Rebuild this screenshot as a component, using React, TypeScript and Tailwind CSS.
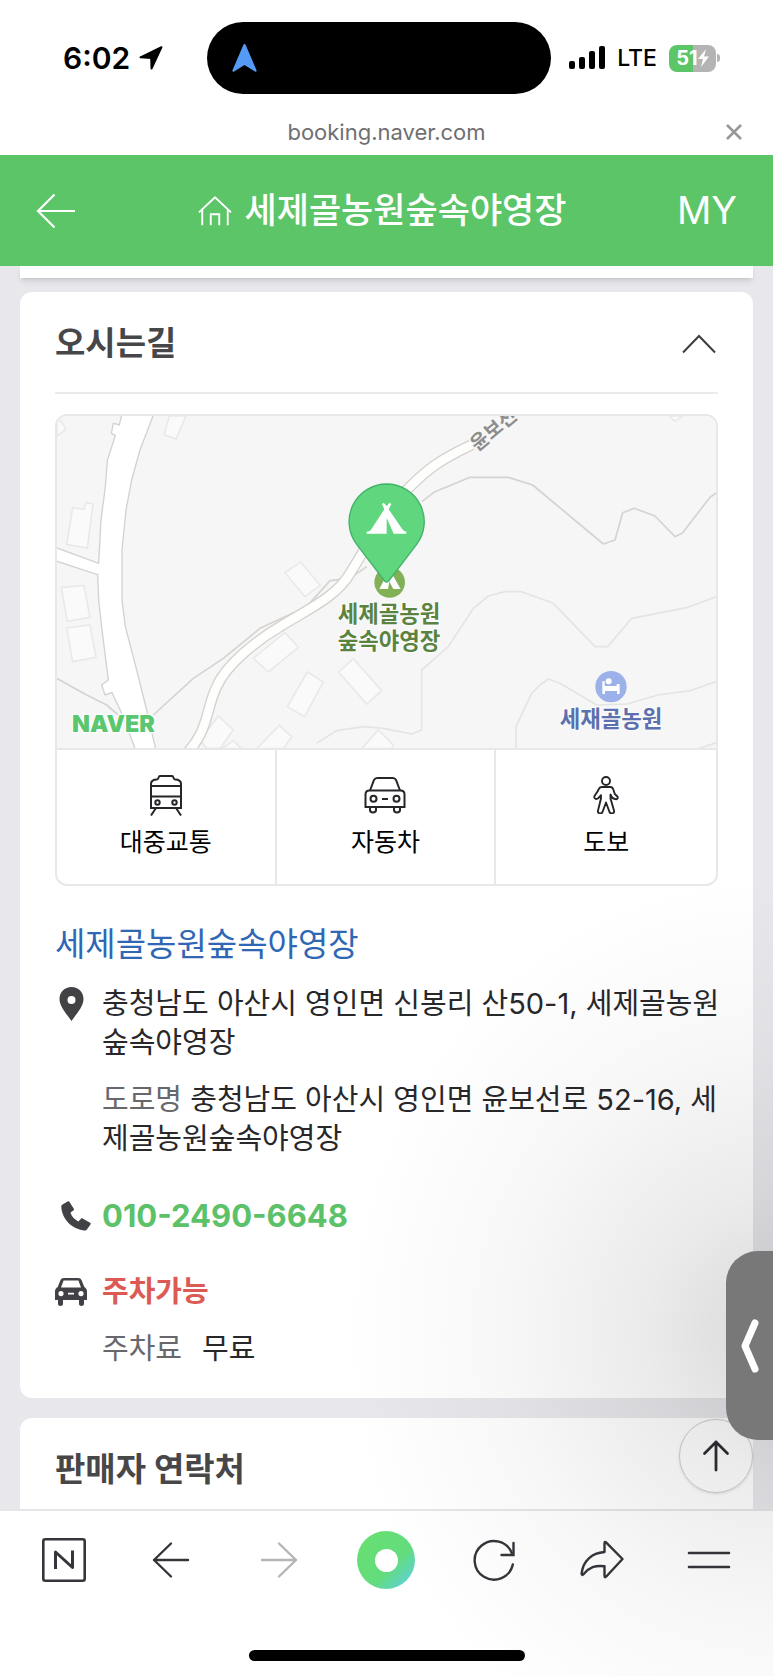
import type { ReactNode } from "react";

const tabs = [
  { name: "대중교통", icon: <TramIcon /> },
  { name: "자동차", icon: <CarIcon /> },
  { name: "도보", icon: <WalkIcon /> },
];

const buildings = [
  "51,62 64,64 78,88 51,108",
  "388,48 438,48 408,117 372,104",
  "98,323 132,328 138,308 159,312 142,444 80,434",
  "64,563 132,556 150,652 82,664",
  "80,684 150,675 168,772 98,785",
  "735,518 782,486 840,556 795,590",
  "640,775 735,697 775,742 685,816",
  "742,920 802,816 850,846 794,950",
  "896,816 940,776 1025,872 980,912",
  "480,1020 535,948 580,990 540,1045 500,1045",
  "545,1046 580,1022 605,1046",
  "650,1046 718,976 755,1010 730,1046",
  "965,1046 1015,990 1060,1035 1055,1046",
  "1888,48 1928,48 1904,64",
];

function TramIcon() {
  return (
    <svg width="34" height="42" viewBox="0 0 34 42" fill="none" stroke="#25262a" strokeWidth="2">
      <path d="M2 34V10c0-3 2-4.500 6-4.500 2 0 1-3.500 3-3.500h12c2 0 1 3.500 3 3.500 4 0 6 1.500 6 4.500v24z" />
      <path d="M2 12h30M2 22.500h30" />
      <circle cx="8.500" cy="28.500" r="2.200" />
      <circle cx="25.500" cy="28.500" r="2.200" />
      <path d="M7 34l-5 7.500M27 34l5 7.500" />
    </svg>
  );
}

function CarIcon() {
  return (
    <svg width="42" height="38" viewBox="0 0 42 38" fill="none" stroke="#25262a" strokeWidth="2">
      <path d="M6 14.500l4-10.500c.8-1.600 1.600-2 3.300-2h15.400c1.700 0 2.500.4 3.300 2l4 10.500" />
      <path d="M1.500 31V18.500c0-2.800 1.500-4 4-4h31c2.500 0 4 1.200 4 4V31z" />
      <path d="M6 31v3c0 3.200 6 3.200 6 0v-3M30 31v3c0 3.200 6 3.200 6 0v-3M18 23h6" />
      <circle cx="9.500" cy="22.800" r="3" />
      <circle cx="32.500" cy="22.800" r="3" />
    </svg>
  );
}

function WalkIcon() {
  return (
    <svg width="26" height="38" viewBox="0 0 26 38" fill="none" stroke="#25262a" strokeWidth="1.900" strokeLinejoin="round">
      <circle cx="13" cy="5" r="4" />
      <path d="M8.500 11h9c1.800 0 2.300 1 2.800 2.500l1.500 4.500 2.600 2.500c1 1.500-.4 3.600-2.400 2.500l-2.500-1-2-3.500v4l3.500 12c.8 3-3.200 4-4.500 1.500L13 26.500 9.500 36c-1.300 2.500-5.300 1.500-4.500-1.500l3-12v-3.300c-1.500 1.500-3 4.300-4.800 3.800-1.700-.4-2.200-1.700-1.700-3l2.700-4 1.500-2.800c.6-1.500 1.300-2.200 2.800-2.200z" />
    </svg>
  );
}

function StatusBar() {
  return (
    <div className="flex h-[113px] items-start pt-[22px] text-black">
      <div className="flex h-[72px] w-[207px] flex-none items-center gap-[9px] pl-[63px]">
        <span className="text-[30px] font-semibold">6:02</span>
        <svg width="24" height="24" viewBox="0 0 24 24">
          <path
            d="M22.500 1.200L1.500 11.300l10.700.7.300 10.500z"
            stroke="#000"
            strokeWidth="2"
            strokeLinejoin="round"
          />
        </svg>
      </div>
      <div className="flex h-[72px] grow items-center rounded-full bg-black pl-[25px]">
        <svg width="25" height="28" viewBox="0 0 25 28">
          <path
            d="M12.500 0c.6 0 1 .4 1.300 1.200l10.700 25c.5 1.300-.5 2-1.600 1.300L12.500 21 2.100 27.500c-1.100.7-2.100 0-1.600-1.300l10.700-25c.3-.8.700-1.200 1.300-1.200z"
            fill="#549bf8"
          />
        </svg>
      </div>
      <div className="flex h-[72px] w-[222px] flex-none items-center justify-end gap-3 pr-[53px]">
        <svg width="36" height="24" viewBox="0 0 36 24">
          <rect x="0" y="15" width="6" height="8" rx="2" />
          <rect x="10" y="11" width="6" height="12" rx="2" />
          <rect x="20" y="5" width="6" height="18" rx="2" />
          <rect x="30" y="0" width="6" height="23" rx="2" />
        </svg>
        <span className="text-[23px] font-medium">LTE</span>
        <div className="flex items-center gap-px">
          <div className="flex h-[27px] w-[47px] items-center justify-center rounded-lg bg-[linear-gradient(90deg,#5cc568_51%,#b4b4b4_51%)] text-white">
            <span className="text-[20px] font-bold">51</span>
            <svg width="11" height="18" viewBox="0 0 11 18" fill="currentColor">
              <path d="M8 0L0 10h5l-2 8 8-10.500H6z" />
            </svg>
          </div>
          <div className="h-2 w-[3px] rounded-r-full bg-[#b4b4b4]"></div>
        </div>
      </div>
    </div>
  );
}

function RouteMap() {
  return (
    <svg
      className="block h-[332px] w-full bg-[#f6f6f6]"
      viewBox="51 48 1977 996"
      preserveAspectRatio="xMidYMid slice"
      role="img"
      aria-label="지도"
    >
      <g fill="#fafafa" stroke="#e9e9eb" strokeWidth="5">
        {buildings.map((points) => (
          <polygon key={points} points={points} />
        ))}
      </g>

      {/* contour lines */}
      <g fill="none" stroke="#e4e4e4" strokeWidth="5" strokeLinejoin="round">
        <path d="M830 1030l60-38 80-12 60 5 85 17 30-12V810l80-70 75-115 45-37 50-13h50l95 35 125 130h38l72-85 165-32 90-33" />
        <path d="M1428 1046v-66l47-100 25-25 25-18 35 13 110 65 90-3 95-27 95-13 80-28M1975 1046l55-18" />
        <path stroke="#d3d3d3" d="M1145 305l40-30 105-43h115l73 23 212 177 35-12 23-82 35-13 62 23 60 62 23-12 82-106 20-14" />
        <path stroke="#d6d3d1" d="M340 945l120-110 90-60 110-90 140-65 70-78 60-7 50-35M50 835l90 50 60 30 35 30" />
      </g>

      {/* roads */}
      <path
        d="M246 40l-8 35-18-5-6 30 12 6-24 76-6 78-13 100-7 130L40 440v40l133 44 3 76 10 90 19 150-20 15 10 30 21-7 34 72 40 110h60l-30-130-30-120-34-130-10-80V450l12-120 17-90 25-90 42-110z"
        fill="#fff"
        stroke="#d5d1cf"
        strokeWidth="4"
      />
      <g fill="none" strokeLinecap="round">
        <path d="M420 1080C510 1000 495 930 530 860C560 790 660 715 720 680C800 630 890 590 930 520C980 440 1040 330 1105 265C1165 205 1200 180 1290 137" stroke="#d5d1cf" strokeWidth="34" />
        <path d="M420 1080C510 1000 495 930 530 860C560 790 660 715 720 680C800 630 890 590 930 520C980 440 1040 330 1105 265C1165 205 1200 180 1290 137" stroke="#fefefc" strokeWidth="26" />
      </g>
      <text
        transform="translate(1312 156) rotate(-40)"
        fontSize="58"
        fontWeight="600"
        fill="#8d8d8d"
        stroke="#f6f6f6"
        strokeWidth="10"
        paintOrder="stroke"
      >
        윤보선
      </text>

      {/* campsite */}
      <circle cx="1049" cy="547" r="46" fill="#82b057" />
      <path d="M1018 567l22-42h18l24 42h-22l-12-22-4 22z" fill="#fff" />
      <path
        d="M1040 252a113 113 0 0 1 90 181L1046 543q-6 7-12 0L950 433A113 113 0 0 1 1040 252z"
        fill="#60d67f"
        stroke="#43b36b"
        strokeWidth="4"
      />
      <path
        d="M1031 308l9 10 9-10 5 4-8 16 40 58q5 9 13 9v6h-38l-21-47v47h-60v-6q10 0 15-9l38-58-7-16z"
        fill="#fff"
      />
      <g
        fontSize="67"
        fontWeight="600"
        textAnchor="middle"
        stroke="#fbfbfb"
        strokeWidth="8"
        paintOrder="stroke"
        strokeLinejoin="round"
      >
        <text x="1047" y="665" fill="#5b8340">
          세제골농원
        </text>
        <text x="1047" y="748" fill="#5b8340">
          숲속야영장
        </text>
        <text x="1713" y="980" fill="#5b70ae">
          세재골농원
        </text>
      </g>
      <circle cx="1713" cy="860" r="47" fill="#9cb1e9" />
      <path d="M1687 844h7v14h36v-6h9v30h-8v-9h-36v9h-8z" fill="#fff" />
      <circle cx="1706" cy="844" r="9" fill="#fff" />

      <text
        x="96"
        y="996"
        fontSize="70"
        fontWeight="900"
        fill="#5ac66f"
        stroke="#fff"
        strokeWidth="8"
        paintOrder="stroke"
      >
        NAVER
      </text>
    </svg>
  );
}

function InfoRow({ icon, children }: { icon?: ReactNode; children: ReactNode }) {
  return (
    <div className="-mr-2 flex">
      <div className="flex h-[39px] w-[47px] flex-none items-center">{icon}</div>
      <div className="min-w-0 grow break-all">{children}</div>
    </div>
  );
}

function Directions() {
  return (
    <section className="rounded-xl bg-white px-[35px] pb-[30px]">
      <header className="flex h-[102px] items-center justify-between border-b-2 border-[#ebebed] pt-[3px]">
        <h2 className="text-[33px] font-bold text-[#47474a]">오시는길</h2>
        <button aria-label="접기" className="mr-[2px]">
          <svg width="34" height="20" viewBox="0 0 34 20" fill="none" stroke="#3c3c40" strokeWidth="2">
            <path d="M1 18.500L17 2l16 16.500" />
          </svg>
        </button>
      </header>

      <div className="mt-5 overflow-hidden rounded-xl border-2 border-[#e8e8ea]">
        <RouteMap />
        <div className="grid h-[136px] grid-cols-3 divide-x-2 divide-[#e8e8ea] border-t-2 border-[#e8e8ea]">
          {tabs.map((tab) => (
            <button
              key={tab.name}
              className="flex flex-col items-center gap-[10px] pt-6 text-[25px] leading-8 text-black"
            >
              <span className="flex h-[42px] items-center">{tab.icon}</span>
              {tab.name}
            </button>
          ))}
        </div>
      </div>

      <h3 className="mt-[34px] text-[33px] leading-12 text-[#2f67b5]">
        <a href="#place">세제골농원숲속야영장</a>
      </h3>

      <div className="mt-4 text-[29px] leading-[39px] text-[#28282b]">
        <InfoRow
          icon={
            <svg className="ml-1" width="25" height="34" viewBox="0 0 25 34">
              <path
                d="M12.500 0C5.500 0 .5 5.200.5 12c0 7.500 6.500 14 12 22 5.500-8 12-14.500 12-22 0-6.800-5-12-12-12zm0 9a4 4 0 1 1 0 8 4 4 0 0 1 0-8z"
                fill="#424246"
              />
            </svg>
          }
        >
          <p>충청남도 아산시 영인면 신봉리 산50-1, 세제골농원숲속야영장</p>
          <p className="mt-[18px]">
            <span className="text-[#68686c]">도로명</span> 충청남도 아산시 영인면 윤보선로 52-16,
            세제골농원숲속야영장
          </p>
        </InfoRow>

        <div className="mt-[38px]">
          <InfoRow
            icon={
              <svg className="ml-[6px]" width="30" height="30" viewBox="0 0 30 30">
                <path
                  d="M1.500 3.500L7 .3c.6-.3 1.100-.1 1.400.5l4.400 7c.4.7.2 1.300-.4 1.700l-2.900 2c.9 3.600 4.200 7.200 8 9l2.400-2.700c.5-.6 1.100-.6 1.700-.2l7.500 4.200c.7.400.8 1 .4 1.700l-3.600 5c-.5.800-1.100 1-2 1C12 28.800.8 19 .3 5.600c0-1 .3-1.600 1.200-2.100z"
                  fill="#424246"
                />
              </svg>
            }
          >
            <a href="tel:010-2490-6648" className="text-[31px] font-bold text-[#5cc169]">
              010-2490-6648
            </a>
          </InfoRow>
        </div>

        <div className="mt-9">
          <InfoRow
            icon={
              <svg width="32" height="28" viewBox="0 0 32 28">
                <path
                  fillRule="evenodd"
                  d="M9 0h14c2 0 3 .8 3.700 2.500L29.300 9C31 10 32 11.500 32 13.500V22h-3v4c0 2.600-5 2.600-5 0v-4H8v4c0 2.600-5 2.600-5 0v-4H0v-8.500C0 11.500 1 10 2.700 9l2.600-6.500C6 .8 7 0 9 0zM8.600 2.500L6 9.500h20l-2.600-7zM6 13a2.600 2.600 0 1 0 0 5.200A2.600 2.600 0 0 0 6 13zm20 0a2.600 2.600 0 1 0 0 5.200 2.600 2.600 0 0 0 0-5.200zm-13 1.700v1.800h6v-1.800z"
                  fill="#424246"
                />
              </svg>
            }
          >
            <p className="font-bold text-[#dc5a54]">주차가능</p>
            <p className="mt-[18px] flex gap-5">
              <span className="text-[#68686c]">주차료</span>
              <span>무료</span>
            </p>
          </InfoRow>
        </div>
      </div>
    </section>
  );
}

function BottomBar() {
  return (
    <nav className="h-[167px] border-t-2 border-[#e6e6e9] bg-white px-[10px] text-[#35363b]">
      <div className="grid h-[98px] grid-cols-7 *:flex *:items-center *:justify-center">
        <a href="#naver" aria-label="네이버">
          <svg width="44" height="44" viewBox="0 0 44 44" fill="none" stroke="currentColor" strokeLinejoin="round">
            <rect x="1.300" y="1.300" width="41.400" height="41.400" rx="2" strokeWidth="2.600" />
            <path d="M13.500 31V14l17 15.500V12.500" strokeWidth="3" />
          </svg>
        </a>
        <button aria-label="뒤로">
          <svg width="38" height="38" viewBox="0 0 38 38" fill="none" stroke="currentColor" strokeWidth="2.400" strokeLinecap="round" strokeLinejoin="round">
            <path d="M36 19H2M19 2.500L2 19l17 16.500" />
          </svg>
        </button>
        <button aria-label="앞으로" className="text-[#b5b5b7]">
          <svg width="38" height="38" viewBox="0 0 38 38" fill="none" stroke="currentColor" strokeWidth="2.400" strokeLinecap="round" strokeLinejoin="round">
            <path d="M2 19h34M19 2.500L36 19 19 35.500" />
          </svg>
        </button>
        <button aria-label="그린닷">
          <span className="flex size-[58px] items-center justify-center rounded-full bg-[linear-gradient(135deg,#69e070_0%,#63dc7c_60%,#5fd0e4_95%)]">
            <span className="size-[23px] rounded-full bg-white"></span>
          </span>
        </button>
        <button aria-label="새로고침">
          <svg width="42" height="42" viewBox="0 0 42 42" fill="none" stroke="currentColor" strokeWidth="2.400" strokeLinecap="round">
            <path d="M39.800 25.500A19.300 19.300 0 1 1 39 14.500" />
            <path d="M40.500 4v12H28.500" />
          </svg>
        </button>
        <button aria-label="공유">
          <svg width="44" height="40" viewBox="0 0 44 40" fill="none" stroke="currentColor" strokeWidth="2.400" strokeLinejoin="round">
            <path d="M24.500 3.500c0-1.800.6-2 1.800-.9L42.500 19 26.300 36.500c-1.200 1.200-1.800.8-1.800-.9v-9.400c-9.500-1-15 1-21 8-1 1.200-1.900.8-1.900-.6C3 20.500 12 13 24.500 12z" />
          </svg>
        </button>
        <button aria-label="메뉴">
          <svg width="44" height="18" viewBox="0 0 44 18" fill="none" stroke="currentColor" strokeWidth="2.600" strokeLinecap="round">
            <path d="M2 2h40M2 16h40" />
          </svg>
        </button>
      </div>
      <div className="mx-auto mt-[41px] h-[11px] w-[276px] rounded-full bg-black"></div>
    </nav>
  );
}

export default function App() {
  return (
    <div className="relative flex min-h-screen flex-col overflow-hidden bg-white font-['Inter','Noto_Sans_CJK_KR',sans-serif]">
      <StatusBar />
      <div className="grid h-[42px] grid-cols-[1fr_auto_1fr] items-center pb-1 text-[#6f6f71]">
        <span></span>
        <span className="text-[22px] leading-8">booking.naver.com</span>
        <button aria-label="닫기" className="mr-[31px] justify-self-end">
          <svg width="16" height="16" viewBox="0 0 16 16" fill="none" stroke="#97979a" strokeWidth="2.600">
            <path d="M1 1l14 14M15 1L1 15" />
          </svg>
        </button>
      </div>

      <header className="grid h-[111px] grid-cols-[1fr_auto_1fr] items-center bg-[#5cc568] pr-9 pl-9 text-white">
        <button aria-label="이전">
          <svg width="40" height="36" viewBox="0 0 40 36" fill="none" stroke="currentColor" strokeWidth="2.200">
            <path d="M39 18H2M18.500 1.500L2 18l16.500 16.500" />
          </svg>
        </button>
        <a href="#home" className="mr-2 flex items-center gap-3">
          <svg width="34" height="32" viewBox="0 0 36 32" fill="none" stroke="currentColor" strokeWidth="2">
            <path d="M1 17.500L18 1.500l17 16" />
            <path d="M4.500 14.500V31M31.500 14.500V31M13.500 31V19.500h9V31" />
          </svg>
          <h1 className="text-[35px] font-medium">세제골농원숲속야영장</h1>
        </a>
        <a href="#my" className="justify-self-end text-[38px]">
          MY
        </a>
      </header>

      <main className="relative flex grow flex-col bg-[#e8e8ec] px-5">
        <div className="mb-[14px] h-3 bg-white shadow-md"></div>
        <Directions />
        <section className="mt-5 flex min-h-[88px] grow items-center rounded-t-xl bg-white px-[35px] pt-3">
          <h2 className="text-[33px] font-bold text-[#47474a]">판매자 연락처</h2>
        </section>
        <a
          href="#top"
          aria-label="맨 위로"
          className="absolute right-5 bottom-4 flex size-[74px] items-center justify-center rounded-full border border-[#cfcfd1] bg-white/90 shadow-sm"
        >
          <svg width="28" height="32" viewBox="0 0 28 32" fill="none" stroke="#2d2d33" strokeWidth="2.800" strokeLinecap="round" strokeLinejoin="round">
            <path d="M14 30V2M2.500 13.500L14 2l11.500 11.500" />
          </svg>
        </a>
      </main>

      <BottomBar />

      {/* shade behind the edge handle */}
      <div className="pointer-events-none absolute right-0 bottom-0 h-[860px] w-[440px] bg-[radial-gradient(ellipse_430px_460px_at_100%_60%,rgba(0,0,0,0.15),rgba(0,0,0,0.08)_30%,rgba(0,0,0,0.03)_62%,transparent)]"></div>
      <button
        aria-label="패널 열기"
        className="absolute right-0 bottom-[236px] flex h-[189px] w-[47px] items-center justify-center rounded-l-[32px] bg-[#787879]"
      >
        <svg width="18" height="54" viewBox="0 0 18 54" fill="none" stroke="#fff" strokeWidth="7" strokeLinecap="round" strokeLinejoin="round">
          <path d="M14 4L4 27l10 23" />
        </svg>
      </button>
    </div>
  );
}
